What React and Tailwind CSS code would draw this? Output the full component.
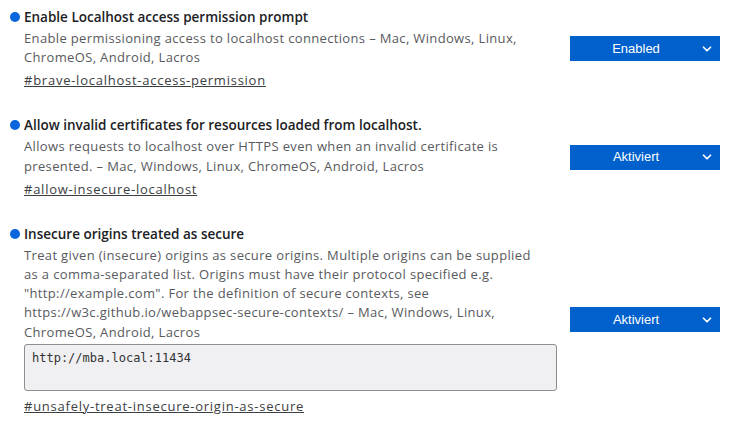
import { ChevronDown } from 'lucide-react';

const flags = [
  {
    title: 'Enable Localhost access permission prompt',
    desc: 'Enable permissioning access to localhost connections – Mac, Windows, Linux, ChromeOS, Android, Lacros',
    link: '#brave-localhost-access-permission',
    value: 'Enabled',
  },
  {
    title: 'Allow invalid certificates for resources loaded from localhost.',
    desc: 'Allows requests to localhost over HTTPS even when an invalid certificate is presented. – Mac, Windows, Linux, ChromeOS, Android, Lacros',
    link: '#allow-insecure-localhost',
    value: 'Aktiviert',
  },
  {
    title: 'Insecure origins treated as secure',
    desc: 'Treat given (insecure) origins as secure origins. Multiple origins can be supplied as a comma-separated list. Origins must have their protocol specified e.g. "http://example.com". For the definition of secure contexts, see https://w3c.github.io/webappsec-secure-contexts/ – Mac, Windows, Linux, ChromeOS, Android, Lacros',
    link: '#unsafely-treat-insecure-origin-as-secure',
    value: 'Aktiviert',
    input: 'http://mba.local:11434',
  },
];

const Flag = ({ flag }) => (
  <div className="flex items-center">
    <div className="flex-1">
      <div className="flex items-center">
        <span className="w-[10px] h-[10px] rounded-full bg-[#0b65dc] ml-[10px] mr-[4px]" />
        <h3 className="text-[13.5px] font-semibold text-[#202124] leading-[22px]">{flag.title}</h3>
      </div>
      <div className="pl-[24px]">
        <p className="text-[13px] leading-[19.2px] tracking-[0.35px] text-[#585a5e] mt-[1px] w-[522px]">{flag.desc}</p>
        {flag.input && (
          <textarea
            defaultValue={flag.input}
            className="block mt-[2px] w-[533px] h-[47px] resize-none bg-[#f0f0f2] border border-[#8e8e8e] rounded-[3px] px-[7px] py-[5px] text-[12px] leading-[16px] text-[#333] outline-none"
            style={{ fontFamily: '"DejaVu Sans Mono", monospace' }}
          />
        )}
        <a
          href="#"
          className={`inline-block ${flag.input ? 'mt-[5px]' : 'mt-[1px]'} text-[13px] leading-[20px] tracking-[0.75px] text-[#3c4043] underline`}
        >
          {flag.link}
        </a>
      </div>
    </div>
    <button
      className="flex items-center w-[150px] h-[25px] bg-[#0060cc] text-white mr-[9px]"
      style={{ fontFamily: '"Liberation Sans", Arial, sans-serif' }}
    >
      <span className="flex-1 text-center text-[13px] pl-[2px]">{flag.value}</span>
      <ChevronDown size={14} strokeWidth={3} className="mr-[6px]" />
    </button>
  </div>
);

const App = () => {
  return (
    <div
      className="w-[729px] h-[423px] bg-white pt-[6px] flex flex-col gap-[23px] overflow-hidden"
      style={{ fontFamily: '"Open Sans", sans-serif' }}
    >
      {flags.map((f) => (
        <Flag key={f.link} flag={f} />
      ))}
    </div>
  );
};

export default App;
